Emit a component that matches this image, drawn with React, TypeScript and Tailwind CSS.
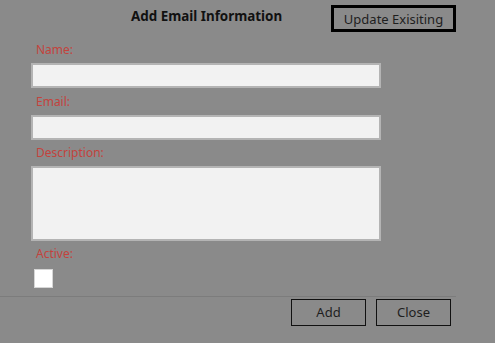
import React, { useState } from "react";

const fieldClass =
  "block w-[350px] border-2 border-[#b4b4b4] bg-[#f2f2f2] outline-none text-[12px] text-[#222]";

const labelClass =
  "h-[16px] pl-[5px] text-[12px] leading-[16px] text-[#c3433d]";

export default function App() {
  const [name, setName] = useState("");
  const [email, setEmail] = useState("");
  const [description, setDescription] = useState("");
  const [active, setActive] = useState(false);

  return (
    <div className="flex h-[343px] w-[495px] flex-col bg-[#8a8a8a] font-['Noto_Sans',sans-serif]">
      {/* Header */}
      <div className="flex items-start pt-[5px]">
        <h1 className="ml-[131px] mt-[2px] text-[13.4px] font-bold leading-[18px] text-[#111]">
          Add Email Information
        </h1>
        <button className="ml-auto mr-[39px] h-[27px] w-[125px] border-[3px] border-black text-[13px] leading-[20px] text-[#1e1e1e]">
          Update Exisiting
        </button>
      </div>

      {/* Form */}
      <div className="flex flex-col pl-[31px] pt-[10px]">
        <label className={labelClass}>Name:</label>
        <input
          value={name}
          onChange={(e) => setName(e.target.value)}
          className={`${fieldClass} mt-[5px] h-[25px]`}
        />

        <label className={`${labelClass} mt-[6px]`}>Email:</label>
        <input
          value={email}
          onChange={(e) => setEmail(e.target.value)}
          className={`${fieldClass} mt-[5px] h-[25px]`}
        />

        <label className={`${labelClass} mt-[5px]`}>Description:</label>
        <textarea
          value={description}
          onChange={(e) => setDescription(e.target.value)}
          className={`${fieldClass} mt-[5px] h-[75px] resize-none`}
        />

        <label className={`${labelClass} mt-[5px]`}>Active:</label>
        <button
          onClick={() => setActive(!active)}
          className="ml-[3px] mt-[7px] flex h-[19px] w-[19px] items-center justify-center border border-[#d6d6d6] bg-white text-[12px] leading-none"
        >
          {active ? "✓" : ""}
        </button>
      </div>

      {/* Footer */}
      <div className="mt-[8px] w-[456px] border-t border-[#7c7c7c]" />
      <div className="flex justify-end gap-[10px] pr-[44px] pt-[2px]">
        <button className="h-[27px] w-[75px] border border-[#111] pt-[1px] text-[13px] text-[#1e1e1e]">
          Add
        </button>
        <button className="h-[27px] w-[75px] border border-[#111] pt-[1px] text-[13px] text-[#1e1e1e]">
          Close
        </button>
      </div>
    </div>
  );
}
